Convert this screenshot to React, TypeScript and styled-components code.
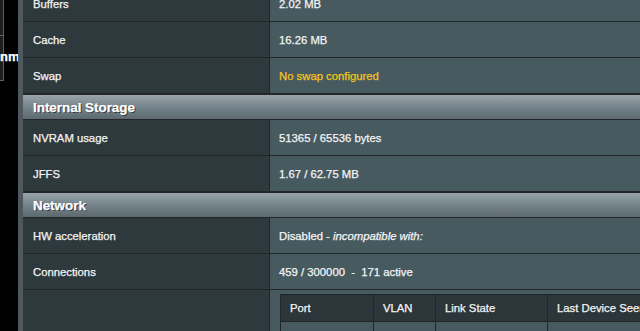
import type { ReactNode } from "react";
import styled, { createGlobalStyle } from "styled-components";

const GlobalStyle = createGlobalStyle`
  html, body {
    margin: 0;
    background: #000;
    overflow: hidden;
  }
  body {
    font-family: "Liberation Sans", Arial, sans-serif;
    font-size: 11.3px;
    color: #f2f2f2;
    -webkit-text-stroke: 0.25px currentColor;
  }
`;

const Page = styled.div`
    display: flex;
    margin-top: -14px;
    width: 820px;
`

const SideMenu = styled.div`
    width: 18px;
    flex-shrink: 0;
`

const MenuBox = styled.div`
    width: 3px;
    background: #1b1d1e;
    border-right: 1px solid #5a5f62;
`

const MenuItem = styled.div<{ $height: number }>`
    height: ${(p) => p.$height - 1}px;
    border-bottom: 1px solid #5a5f62;
`

const MenuText = styled.div`
    padding-top: 14px;
    line-height: 14px;
    font-size: 13px;
    font-weight: bold;
    color: #fff;
    white-space: nowrap;
`

const Panel = styled.div`
    flex: 1;
    border-left: 5px solid #4d595e;
    display: flex;
    flex-direction: column;
`

const Row = styled.div<{ $tall?: boolean }>`
    display: grid;
    grid-template-columns: 246px 1fr;
    min-height: 35px;
    border-bottom: 1px solid #222628;
    ${(p) => p.$tall && "min-height: 60px;"}
`

const Label = styled.div`
    background: #2e393e;
    padding-left: 10px;
    display: flex;
    align-items: center;
    color: #f4f4f4;
`

const Value = styled.div<{ $nested?: boolean }>`
    background: #475a60;
    border-left: 1px solid #222628;
    padding-left: 9px;
    display: flex;
    align-items: center;
    white-space: pre;
    color: #f4f4f4;
    ${(p) => p.$nested && "padding: 4px 0 0 10px; align-items: flex-start;"}
`

const Warn = styled.span`
    color: #f5c518;
`

const SectionHeader = styled.div`
    height: 24px;
    border-top: 1px solid #222628;
    border-bottom: 1px solid #222628;
    background: linear-gradient(#98a4a9, #75838a 50%, #5c6a70);
    padding-left: 10px;
    display: flex;
    align-items: center;
    font-size: 13.4px;
    font-weight: bold;
    color: #fff;
    text-shadow: 1px 1px 0 #2a3033;
`

const PortTable = styled.div`
    width: 420px;
    border: 1px solid #222628;
    display: flex;
    flex-direction: column;
`

const PortGrid = styled.div`
    display: grid;
    grid-template-columns: 92px 62px 112px 1fr;
`

const PortHead = styled(PortGrid)`
    height: 26px;
    background: #2c3539;
    border-bottom: 1px solid #222628;
`

const PortRow = styled(PortGrid)`
    height: 26px;
    background: #475a60;
`

const PortCell = styled.div`
    display: flex;
    align-items: center;
    padding-left: 9px;
    white-space: nowrap;
    & + & {
        border-left: 1px solid #222628;
    }
`

type Field = { label: string; value: ReactNode };

const memory: Field[] = [
    { label: "Buffers", value: "2.02 MB" },
    { label: "Cache", value: "16.26 MB" },
    { label: "Swap", value: <Warn>No swap configured</Warn> },
];

const storage: Field[] = [
    { label: "NVRAM usage", value: "51365 / 65536 bytes" },
    { label: "JFFS", value: "1.67 / 62.75 MB" },
];

const network: Field[] = [
    { label: "HW acceleration", value: <>Disabled - <em>incompatible with:</em></> },
    { label: "Connections", value: "459 / 300000  -  171 active" },
];

const ports = [
    { port: "WAN", vlan: "2", link: "1000 Full Duplex", mac: "04:D4:C4:4E:5F:A0" },
];

const Rows = ({ items }: { items: Field[] }) => (
    <>
        {items.map((f) => (
            <Row key={f.label}>
                <Label>{f.label}</Label>
                <Value>{f.value}</Value>
            </Row>
        ))}
    </>
);

export default function App() {
    return (
        <>
            <GlobalStyle />
            <Page>
                <SideMenu>
                    <MenuBox>
                        <MenuItem $height={50} />
                        <MenuItem $height={45}>
                            <MenuText>nm</MenuText>
                        </MenuItem>
                    </MenuBox>
                </SideMenu>
                <Panel>
                    <Rows items={memory} />
                    <SectionHeader>Internal Storage</SectionHeader>
                    <Rows items={storage} />
                    <SectionHeader>Network</SectionHeader>
                    <Rows items={network} />
                    <Row $tall>
                        <Label />
                        <Value $nested>
                            <PortTable>
                                <PortHead>
                                    <PortCell>Port</PortCell>
                                    <PortCell>VLAN</PortCell>
                                    <PortCell>Link State</PortCell>
                                    <PortCell>Last Device Seen</PortCell>
                                </PortHead>
                                {ports.map((p) => (
                                    <PortRow key={p.port}>
                                        <PortCell>{p.port}</PortCell>
                                        <PortCell>{p.vlan}</PortCell>
                                        <PortCell>{p.link}</PortCell>
                                        <PortCell><Warn>{p.mac}</Warn></PortCell>
                                    </PortRow>
                                ))}
                            </PortTable>
                        </Value>
                    </Row>
                </Panel>
            </Page>
        </>
    );
}
